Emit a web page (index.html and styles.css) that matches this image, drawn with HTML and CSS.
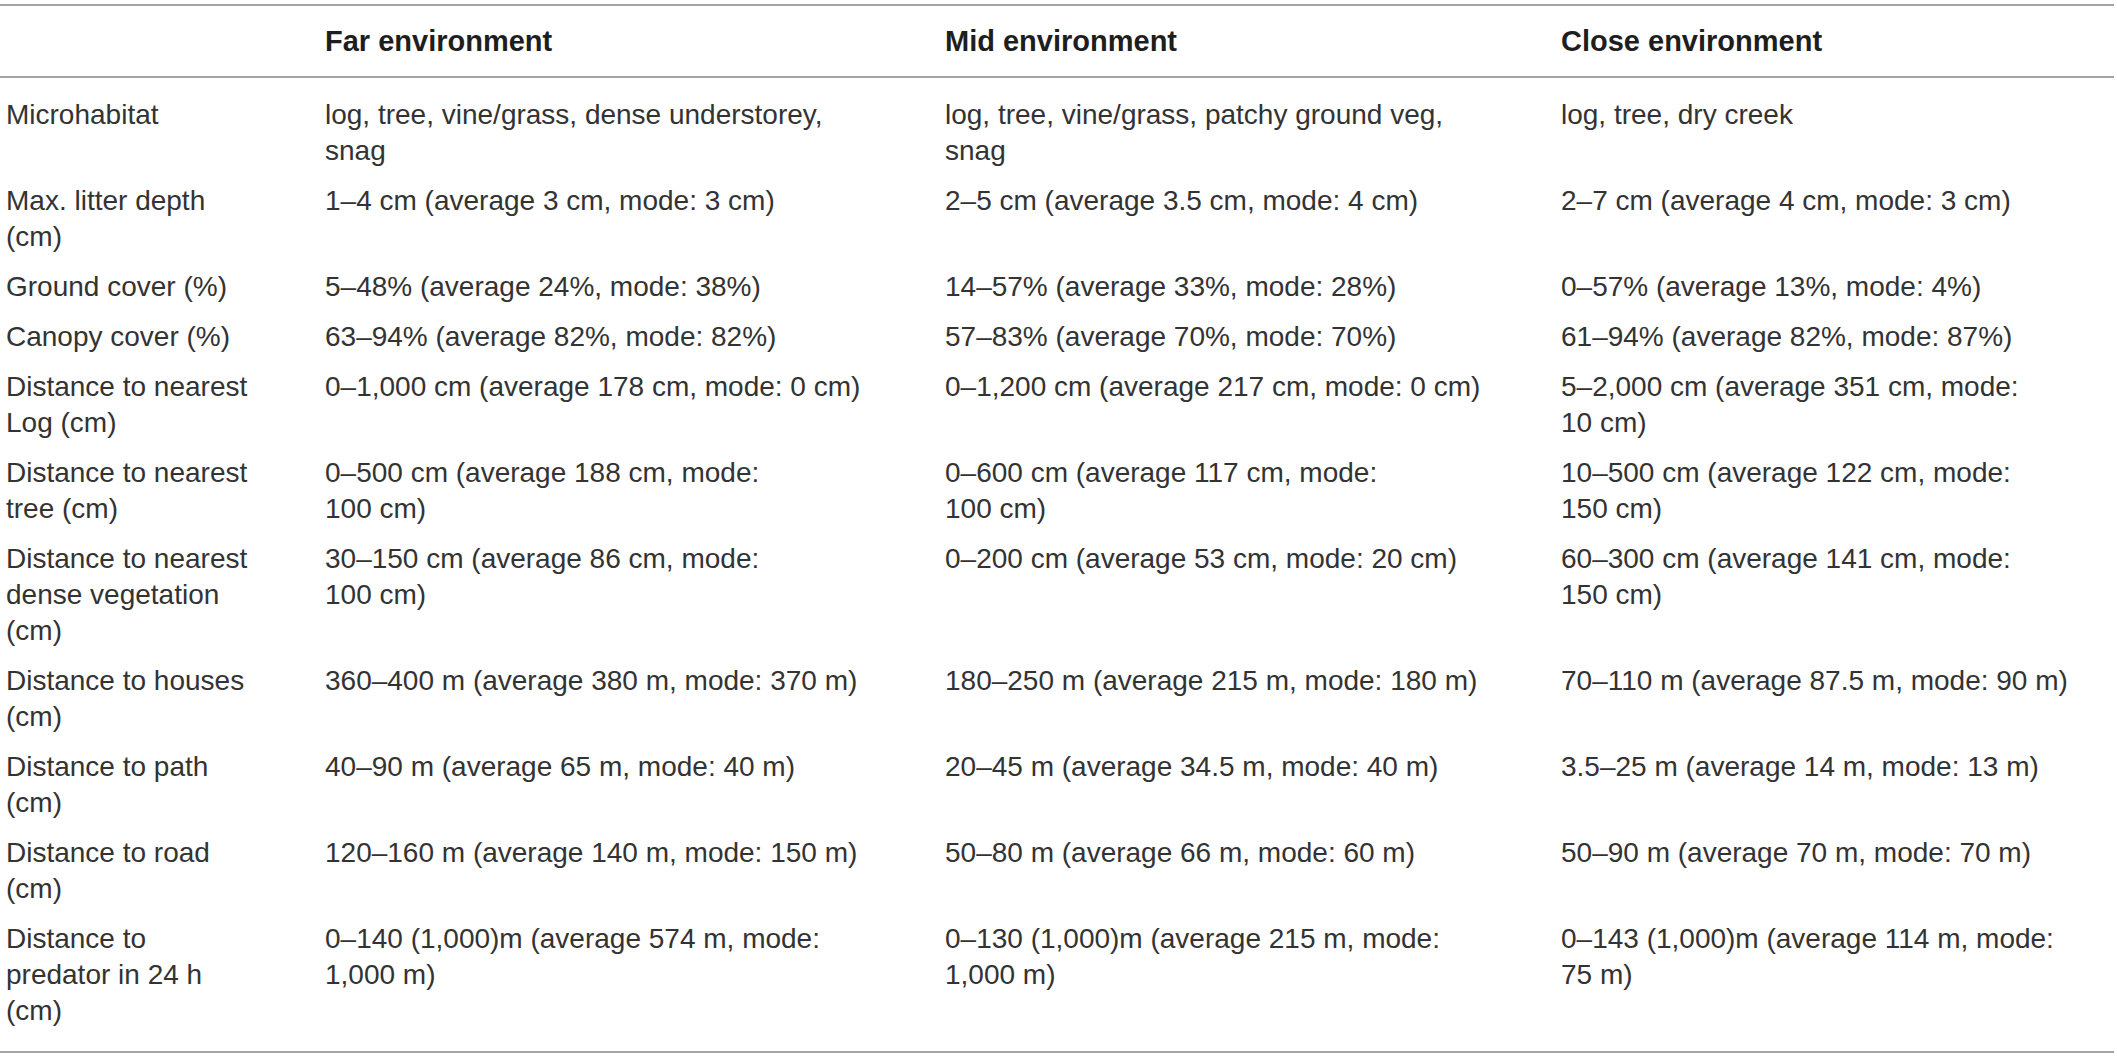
FILE: index.html
```html
<!DOCTYPE html>
<html lang="en">
<head>
  <meta charset="UTF-8">
  <title>Environment characteristics</title>
  <link rel="stylesheet" href="styles.css">
</head>
<body>

  <table class="env-table">
    <colgroup>
      <col class="col-label">
      <col class="col-far">
      <col class="col-mid">
      <col class="col-close">
    </colgroup>
    <thead>
      <tr>
        <th></th>
        <th>Far environment</th>
        <th>Mid environment</th>
        <th>Close environment</th>
      </tr>
    </thead>
    <tbody>
      <tr class="first-row">
        <td>Microhabitat</td>
        <td>log, tree, vine/grass, dense understorey,<br>snag</td>
        <td>log, tree, vine/grass, patchy ground veg,<br>snag</td>
        <td>log, tree, dry creek</td>
      </tr>
      <tr>
        <td>Max. litter depth<br>(cm)</td>
        <td>1–4 cm (average 3 cm, mode: 3 cm)</td>
        <td>2–5 cm (average 3.5 cm, mode: 4 cm)</td>
        <td>2–7 cm (average 4 cm, mode: 3 cm)</td>
      </tr>
      <tr>
        <td>Ground cover (%)</td>
        <td>5–48% (average 24%, mode: 38%)</td>
        <td>14–57% (average 33%, mode: 28%)</td>
        <td>0–57% (average 13%, mode: 4%)</td>
      </tr>
      <tr>
        <td>Canopy cover (%)</td>
        <td>63–94% (average 82%, mode: 82%)</td>
        <td>57–83% (average 70%, mode: 70%)</td>
        <td>61–94% (average 82%, mode: 87%)</td>
      </tr>
      <tr>
        <td>Distance to nearest<br>Log (cm)</td>
        <td>0–1,000 cm (average 178 cm, mode: 0 cm)</td>
        <td>0–1,200 cm (average 217 cm, mode: 0 cm)</td>
        <td>5–2,000 cm (average 351 cm, mode:<br>10 cm)</td>
      </tr>
      <tr>
        <td>Distance to nearest<br>tree (cm)</td>
        <td>0–500 cm (average 188 cm, mode:<br>100 cm)</td>
        <td>0–600 cm (average 117 cm, mode:<br>100 cm)</td>
        <td>10–500 cm (average 122 cm, mode:<br>150 cm)</td>
      </tr>
      <tr>
        <td>Distance to nearest<br>dense vegetation<br>(cm)</td>
        <td>30–150 cm (average 86 cm, mode:<br>100 cm)</td>
        <td>0–200 cm (average 53 cm, mode: 20 cm)</td>
        <td>60–300 cm (average 141 cm, mode:<br>150 cm)</td>
      </tr>
      <tr>
        <td>Distance to houses<br>(cm)</td>
        <td>360–400 m (average 380 m, mode: 370 m)</td>
        <td>180–250 m (average 215 m, mode: 180 m)</td>
        <td>70–110 m (average 87.5 m, mode: 90 m)</td>
      </tr>
      <tr>
        <td>Distance to path<br>(cm)</td>
        <td>40–90 m (average 65 m, mode: 40 m)</td>
        <td>20–45 m (average 34.5 m, mode: 40 m)</td>
        <td>3.5–25 m (average 14 m, mode: 13 m)</td>
      </tr>
      <tr>
        <td>Distance to road<br>(cm)</td>
        <td>120–160 m (average 140 m, mode: 150 m)</td>
        <td>50–80 m (average 66 m, mode: 60 m)</td>
        <td>50–90 m (average 70 m, mode: 70 m)</td>
      </tr>
      <tr class="last-row">
        <td>Distance to<br>predator in 24 h<br>(cm)</td>
        <td>0–140 (1,000)m (average 574 m, mode:<br>1,000 m)</td>
        <td>0–130 (1,000)m (average 215 m, mode:<br>1,000 m)</td>
        <td>0–143 (1,000)m (average 114 m, mode:<br>75 m)</td>
      </tr>
    </tbody>
  </table>

</body>
</html>
```

FILE: styles.css
```css
body {
  margin: 0;
  padding-top: 4px;
  font-family: 'Liberation Sans', Arial, sans-serif;
  color: #333;
  background: #fff;
}

.env-table {
  width: 2114px;
  border-collapse: collapse;
  table-layout: fixed;
  font-size: 28px;
  line-height: 36px;
}

.col-label {
  width: 319px;
}

.col-far {
  width: 620px;
}

.col-mid {
  width: 616px;
}

.col-close {
  width: 559px;
}

.env-table th {
  text-align: left;
  font-size: 29px;
  font-weight: bold;
  line-height: 37px;
  color: #1e1e1e;
  padding: 17px 6px 16px;
  border-top: 2px solid #a4a4a4;
  border-bottom: 2px solid #a4a4a4;
}

.env-table td {
  vertical-align: top;
  white-space: nowrap;
  padding: 7px 6px;
}

.first-row td {
  padding-top: 19px;
}

.last-row td {
  padding-bottom: 22px;
  border-bottom: 2px solid #a4a4a4;
}
```
